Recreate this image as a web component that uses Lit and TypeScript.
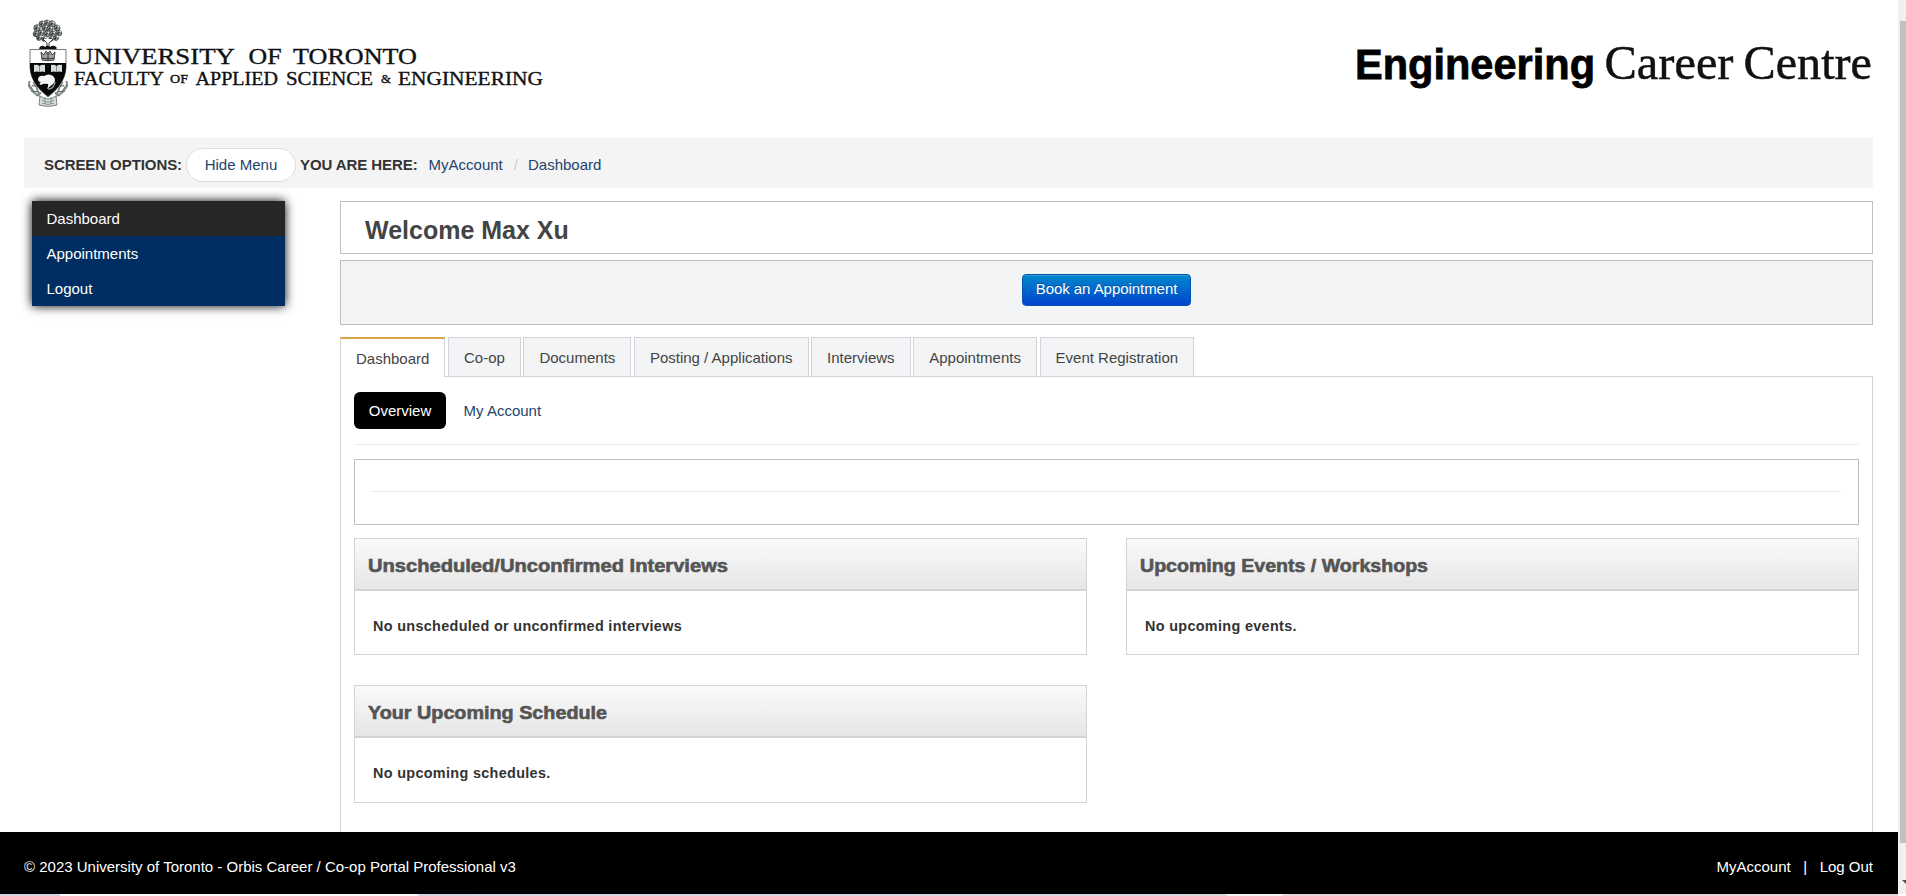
import { LitElement, html, css, svg } from "lit";
import { customElement, property } from "lit/decorators.js";
import { classMap } from "lit/directives/class-map.js";

@customElement("uni-crest")
class UniCrest extends LitElement {
  static styles = css`
    :host { display: block; width: 40px; height: 92px; }
    svg { display: block; }
  `;
  render() {
    const leaves: number[][] = [
      [19, 5, 3], [14, 6, 3], [24, 6, 3.2], [9, 10, 3.2], [17, 10, 3], [22, 11, 3], [29, 10, 3],
      [8, 16, 2.8], [13, 15, 3], [19, 16, 3], [25, 16, 3], [31, 15, 2.8], [11, 20, 2.4], [16, 21, 2.2], [23, 21, 2.2], [28, 20, 2.4],
    ];
    return html`<svg width="40" height="92" viewBox="0 0 40 92">
      <g stroke="#444" stroke-width=".9">
        ${leaves.map(
          ([x, y, r]) => svg`<circle cx=${x} cy=${y} r=${r} fill="#929e9b"></circle>
            <path d="M${x - 2} ${y + 1}l2-2.5 2 2M${x} ${y - 1}l-1 3" fill="none" stroke="#222" stroke-width=".8"></path>
            <circle cx=${x + 1.5} cy=${y - 1.5} r=".9" fill="#eef2f0" stroke="none"></circle>`
        )}
      </g>
      <path d="M15 21l4 4v5h2v-5l4-4" fill="#fff" stroke="#444"></path>
      <path d="M11 30q3-4 6-1 2.500 -3 5 0 4-3 7 1l-2 2H12z" fill="#111"></path>
      <path d="M2 63q-3 4 1 8 3 5 9 7M38 63q3 4-1 8-3 5-9 7M4 68q4-2 5 3t4 4M36 68q-4-2-5 3t-4 4" fill="none" stroke="#8a9593" stroke-width="2"></path>
      <path d="M1 66l6 9M5 64l3 5M39 66l-6 9M35 64l-3 5M3 73l8 1M37 73l-8 1M8 78l5-3M32 78l-5-3" fill="none" stroke="#606967"></path>
      <path d="M12 78q8 6 16 0l1 9q-9 3-18 0z" fill="#d5dbd9" stroke="#7a8481"></path>
      <path d="M14 82q6 4 12 0M14 85q6 3 12 0M17 79v7M23 79v7" fill="none" stroke="#8b9592"></path>
      <path d="M2 31.500H38V50Q37 66 20 79 3 66 2 50Z" fill="#fff" stroke="#777"></path>
      <path d="M2 45H38V50Q37 66 20 78.500 3 66 2 50Z" fill="#080808"></path>
      <path d="M13 34l3 3 2-4 2 3 2-3 2 4 3-3-1 8q-6 1.500-12 0z" fill="#9aa5a2" stroke="#444"></path>
      <path d="M14 40q6 2 12 0M20 34v8" fill="none" stroke="#333"></path>
      <path d="M6 47q3-1 5.500 1 2.500-2 5.500-1v7q-3-1-5.500 0-2.500-1-5.500 0zM23 47q3-1 5.500 1 2.500-2 5.500-1v7q-3-1-5.500 0-2.500-1-5.500 0z" fill="#d8dedc"></path>
      <path d="M11.500 48v6M28.500 48v6" stroke="#737d7a" stroke-width=".8"></path>
      <path d="M10 61q1-4 6-3 5-3 9 0 4 4 0 8l-6 5q2-3 1-5-5-1-7 1-3-1 0-3-3 0-3-3z" fill="#f4f6f5"></path>
      <path d="M20 71q6 0 7-7" fill="none" stroke="#929b99" stroke-width="1.500"></path>
    </svg>`;
  }
}

@customElement("info-panel")
class InfoPanel extends LitElement {
  @property() heading = "";
  @property({ type: Number }) headingWidth = 0;
  @property() message = "";
  static styles = css`
    :host { display: block; box-sizing: border-box; border: 1px solid #d3d3d3; background: #fff; }
    .head { height: 52px; box-sizing: border-box; border-bottom: 2px solid #d3d3d3; background: linear-gradient(#fafafa, #e6e6e6); padding-left: 12.5px; }
    svg { display: block; overflow: visible; }
    text { font: bold 18px "Liberation Sans", Arial, sans-serif; fill: #555; stroke: #555; stroke-width: 0.6px; }
    .body { height: 63px; padding-left: 18px; font-weight: bold; font-size: 14.4px; line-height: 70px; letter-spacing: 0.33px; color: #333; }
  `;
  render() {
    return html`<div class="head">
        <svg width=${this.headingWidth} height="50">
          <text x="0" y="33" textLength=${this.headingWidth} lengthAdjust="spacingAndGlyphs">${this.heading}</text>
        </svg>
      </div>
      <div class="body">${this.message}</div>`;
  }
}

@customElement("app-root")
class AppRoot extends LitElement {
  static styles = css`
    :host { display: flex; height: 896px; overflow: hidden; background: #fff; color: #333; font: 15px/20px "Liberation Sans", Arial, sans-serif; white-space: nowrap; }
    * { box-sizing: border-box; }
    .page { width: 1898px; height: 896px; display: flex; flex-direction: column; }
    .brand { height: 138px; display: flex; justify-content: space-between; padding: 18px 25px 0 28px; flex: none; }
    .brand-left { display: flex; }
    .wordmark { display: block; overflow: visible; font-family: "Liberation Serif", serif; fill: #111; }
    .uni { stroke: #111; stroke-width: 0.35px; }
    .eng { font: bold 43px "Liberation Sans", Arial, sans-serif; stroke: #000; stroke-width: 0.8px; fill: #000; }
    .career { font-size: 48px; stroke: #111; stroke-width: 0.5px; }
    .crumbs { height: 50px; flex: none; margin: 0 25px 0 24px; padding: 3px 0 0 20px; background: #f4f4f4; display: flex; align-items: center; }
    .crumbs b { letter-spacing: -0.08px; }
    .pill { height: 34px; width: 110px; border: 1px solid #ddd; border-radius: 17px; background: #fff; color: #23446c; text-align: center; line-height: 32px; margin: 0 4px; }
    .link { color: #23446c; }
    .first { margin-left: 11px; }
    .sep { color: #ccc; margin: 0 10px 0 11px; }
    .main { display: flex; flex: 1; min-height: 0; padding: 13px 25px 0 32px; overflow: hidden; }
    .menu { width: 253px; height: 105px; flex: none; margin-right: 55px; background: #002e62; color: #fff; box-shadow: 0 0 10px #000; }
    .item { height: 35px; line-height: 35px; padding-left: 14.5px; }
    .item.on { background: #262626; }
    .content { flex: 1; display: flex; flex-direction: column; }
    .welcome { height: 53px; flex: none; border: 1px solid #bfbfbf; padding-left: 24px; font-weight: bold; font-size: 25px; line-height: 56px; color: #444; }
    .actions { height: 65px; flex: none; margin-top: 6px; border: 1px solid #bfbfbf; background: #f2f4f5; display: flex; justify-content: center; padding-top: 13px; }
    .btn { width: 169px; height: 32px; border: 1px solid #0053b0; border-radius: 4px; background: linear-gradient(#0088cc, #0044cc); color: #fff; text-align: center; line-height: 28px; letter-spacing: -0.05px; text-shadow: 0 -1px 0 rgba(0, 0, 0, 0.25); box-shadow: inset 0 1px 0 rgba(255, 255, 255, 0.2); }
    .tabs { display: flex; gap: 2.6px; height: 40px; flex: none; margin-top: 12px; border-bottom: 1px solid #d1d3d6; }
    .tab { height: 39px; padding: 0 15px; border: 1px solid #d1d3d6; border-bottom: 0; background: #f2f4f5; color: #444; line-height: 40px; }
    .tab.on { height: 40px; border-top: 2px solid #d9a443; background: #fff; line-height: 40px; }
    .pane { flex: 1; border: 1px solid #d1d3d6; border-width: 0 1px; padding: 15px 13px 0; }
    .subnav { display: flex; height: 53px; border-bottom: 1px solid #eaeaea; line-height: 38px; }
    .sub { width: 92px; height: 37px; border-radius: 6px; background: #000; color: #fff; text-align: center; margin-right: 17.6px; }
    .notice { height: 66px; margin: 14px 0 13px; border: 1px solid #bfbfbf; padding: 31px 17px 0; }
    .rule { height: 1px; background: #eaeaea; }
    .panels { display: grid; grid-template-columns: 733px 733px; justify-content: space-between; grid-template-rows: 117px 118px; row-gap: 30px; }
    .footer { height: 62px; flex: none; background: #000; color: #fff; padding: 7px 25px 0 24px; display: flex; align-items: center; justify-content: space-between; }
    .footer .bar { margin: 0 12.5px; }
    .edge { height: 2px; flex: none; background: linear-gradient(90deg, #d2d6e0 0 60px, #f6f6f6 60px 418px, #d4d7e2 418px, #dcd6df 1227px, #f3f1f3 1227px 1282px, #e6d5da 1284px); }
    .scroll { width: 8px; height: 894px; background: #f0f0f0; display: flex; flex-direction: column; }
    .thumb { margin: 21px 0 0 2px; height: 822px; background: #c1c1c1; }
    .arrow { display: block; }
  `;
  render() {
    const tabs = ["Dashboard", "Co-op", "Documents", "Posting / Applications", "Interviews", "Appointments", "Event Registration"];
    const menu = ["Dashboard", "Appointments", "Logout"];
    return html`
      <div class="page">
        <header class="brand">
          <div class="brand-left">
            <uni-crest></uni-crest>
            <svg class="wordmark" width="480" height="92">
              <g class="uni">
                <text x="6" y="45.500" font-size="22.500" textLength="161" lengthAdjust="spacingAndGlyphs">UNIVERSITY</text>
                <text x="180.500" y="45.500" font-size="22.500" textLength="33" lengthAdjust="spacingAndGlyphs">OF</text>
                <text x="225" y="45.500" font-size="22.500" textLength="124" lengthAdjust="spacingAndGlyphs">TORONTO</text>
                <text x="6" y="67" font-size="19" textLength="90" lengthAdjust="spacingAndGlyphs">FACULTY</text>
                <text x="102" y="65" font-size="12" textLength="18" lengthAdjust="spacingAndGlyphs">OF</text>
                <text x="127.500" y="67" font-size="19" textLength="82.500" lengthAdjust="spacingAndGlyphs">APPLIED</text>
                <text x="218" y="67" font-size="19" textLength="87" lengthAdjust="spacingAndGlyphs">SCIENCE</text>
                <text x="313" y="65" font-size="12" textLength="10" lengthAdjust="spacingAndGlyphs">&amp;</text>
                <text x="330" y="67" font-size="19" textLength="145" lengthAdjust="spacingAndGlyphs">ENGINEERING</text>
              </g>
            </svg>
          </div>
          <svg class="wordmark" width="518" height="92">
            <text class="eng" x="0" y="60.500" textLength="240" lengthAdjust="spacingAndGlyphs">Engineering</text>
            <text class="career" x="249.500" y="60.500" textLength="129" lengthAdjust="spacingAndGlyphs">Career</text>
            <text class="career" x="388.500" y="60.500" textLength="128.500" lengthAdjust="spacingAndGlyphs">Centre</text>
          </svg>
        </header>
        <nav class="crumbs">
          <b>SCREEN OPTIONS:</b>
          <span class="pill">Hide Menu</span>
          <b>YOU ARE HERE:</b>
          <span class="link first">MyAccount</span><span class="sep">/</span><span class="link">Dashboard</span>
        </nav>
        <div class="main">
          <nav class="menu">
            ${menu.map((m, i) => html`<div class=${classMap({ item: true, on: i === 0 })}>${m}</div>`)}
          </nav>
          <section class="content">
            <div class="welcome">Welcome Max Xu</div>
            <div class="actions"><div class="btn">Book an Appointment</div></div>
            <div class="tabs">
              ${tabs.map((t, i) => html`<div class=${classMap({ tab: true, on: i === 0 })}>${t}</div>`)}
            </div>
            <div class="pane">
              <div class="subnav"><div class="sub">Overview</div><span class="link">My Account</span></div>
              <div class="notice"><div class="rule"></div></div>
              <div class="panels">
                <info-panel heading="Unscheduled/Unconfirmed Interviews" .headingWidth=${360} message="No unscheduled or unconfirmed interviews"></info-panel>
                <info-panel heading="Upcoming Events / Workshops" .headingWidth=${288} message="No upcoming events."></info-panel>
                <info-panel heading="Your Upcoming Schedule" .headingWidth=${239} message="No upcoming schedules."></info-panel>
              </div>
            </div>
          </section>
        </div>
        <footer class="footer">
          <span>© 2023 University of Toronto - Orbis Career / Co-op Portal Professional v3</span>
          <span>MyAccount<span class="bar">|</span>Log Out</span>
        </footer>
        <div class="edge"></div>
      </div>
      <div class="scroll">
        <div class="thumb"></div>
        <svg class="arrow" width="8" height="51"><path d="M4 37H8V41Z" fill="#505050"></path></svg>
      </div>
    `;
  }
}
